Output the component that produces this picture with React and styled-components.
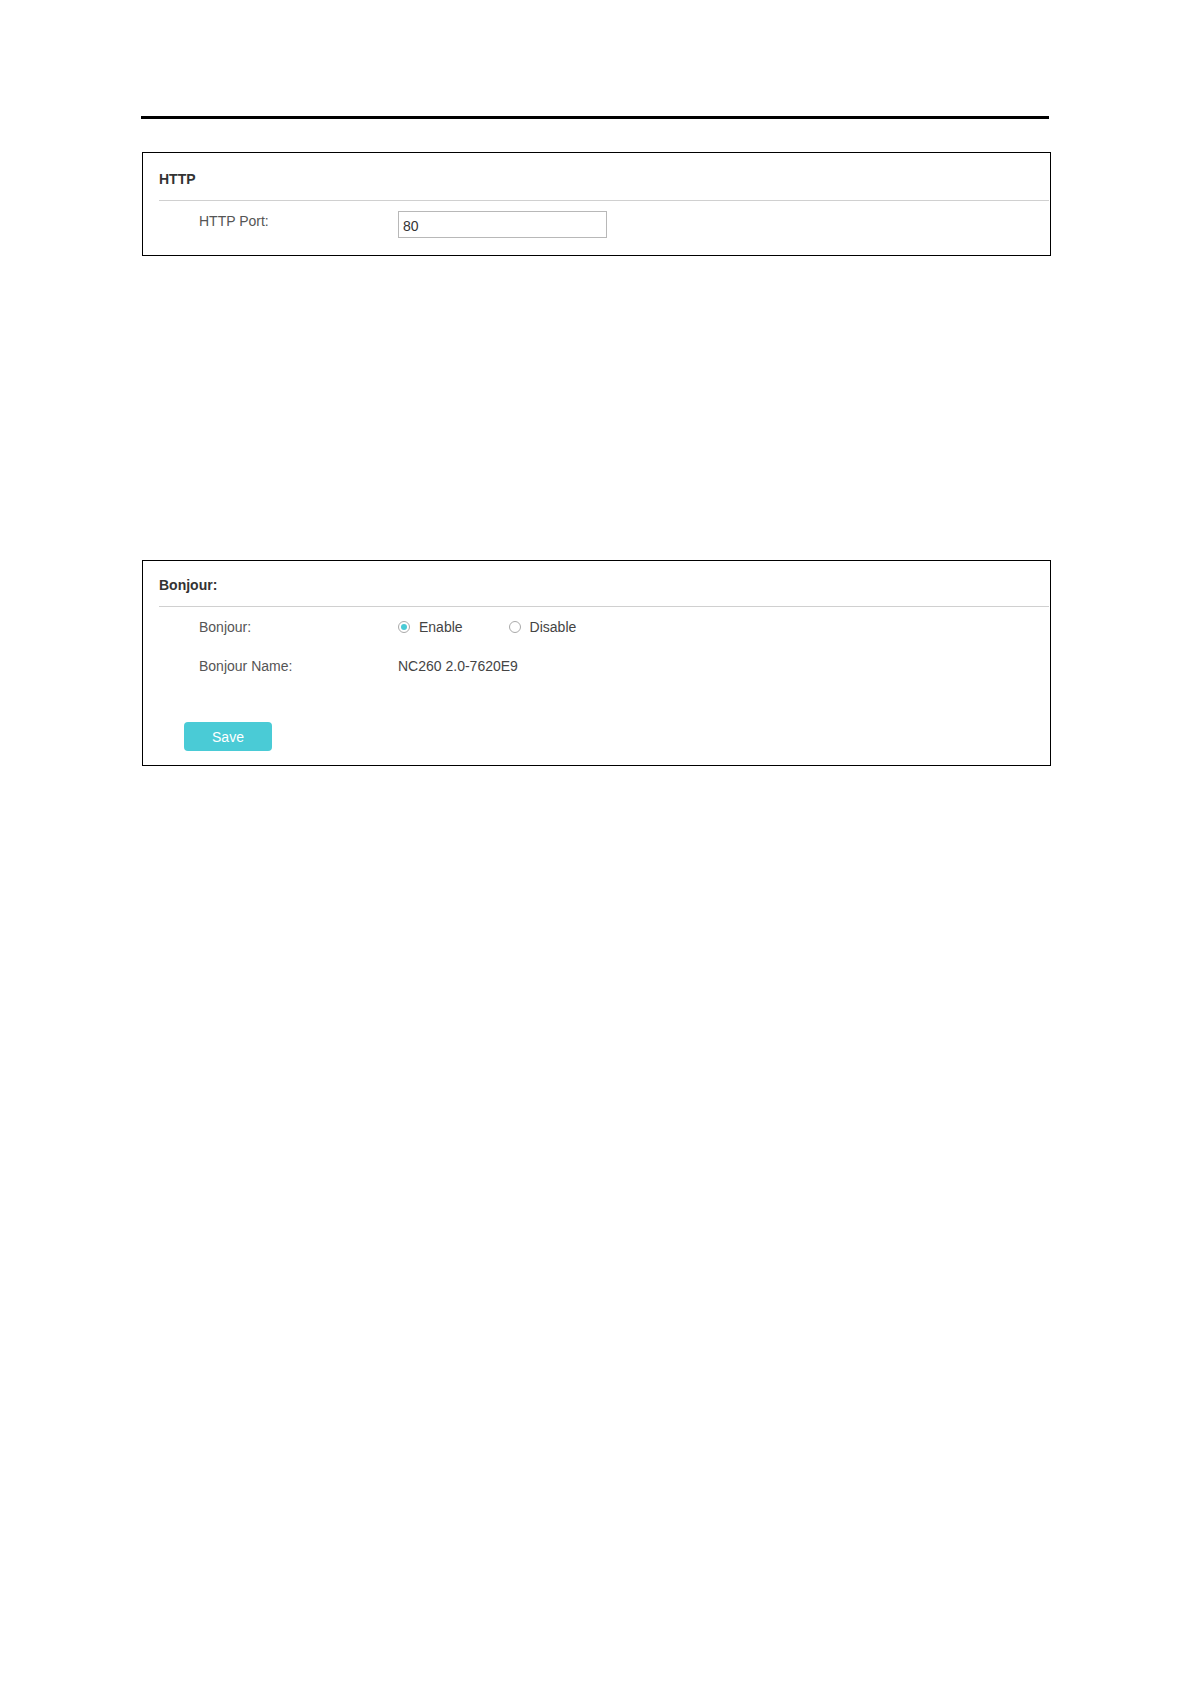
import React from "react";
import styled, { createGlobalStyle } from "styled-components";

const Global = createGlobalStyle`
  html, body { margin: 0; padding: 0; background: #fff; }
  body { font-family: "Liberation Sans", Arial, sans-serif; }
`;

const Page = styled.div`
  padding: 116px 0 0 141px;
  width: 1192px;
  box-sizing: border-box;
`;

const Rule = styled.div`
  width: 908px;
  height: 3px;
  background: #000;
`;

const Panel = styled.section`
  margin: ${(p) => p.$mt}px 0 0 1px;
  width: 909px;
  box-sizing: border-box;
  border: 1px solid #000;
  padding: 0 1px ${(p) => p.$pb}px 0;
`;

const Header = styled.div`
  margin-left: 16px;
  padding: ${(p) => p.$top}px 0 13px 0;
  border-bottom: 1px solid #d0d0d0;
  font-size: 14px;
  line-height: 16px;
  font-weight: bold;
  color: #333;
`;

const Body = styled.div`
  display: flex;
  flex-direction: column;
  gap: ${(p) => p.$gap || 0}px;
  padding: 10px 0 0 56px;
`;

const Row = styled.div`
  display: flex;
  align-items: flex-start;
  min-height: 18px;
`;

const Label = styled.div`
  width: 199px;
  padding-top: 2px;
  font-size: 14px;
  line-height: 16px;
  color: #555;
`;

const Value = styled.div`
  padding-top: 2px;
  font-size: 14px;
  line-height: 16px;
  color: #444;
`;

const TextInput = styled.input`
  width: 209px;
  height: 27px;
  box-sizing: border-box;
  margin: 0;
  border: 1px solid #b8b8b8;
  border-radius: 0;
  padding: 5px 4px 3px 4px;
  font-family: "Liberation Sans", Arial, sans-serif;
  font-size: 14px;
  color: #333;
  outline: none;
`;

const RadioGroup = styled.div`
  display: flex;
  align-items: center;
  height: 16px;
  margin-top: 2px;
  padding-left: 0;
`;

const Option = styled.label`
  display: flex;
  align-items: center;
  gap: 9px;
  margin-right: ${(p) => p.$mr || 0}px;
  font-size: 14px;
  line-height: 16px;
  color: #444;
`;

const RadioDot = styled.span`
  position: relative;
  width: 12px;
  height: 12px;
  box-sizing: border-box;
  border: 1px solid #aaa;
  border-radius: 50%;
  background: #fff;
  &::after {
    content: "";
    display: ${(p) => (p.$checked ? "block" : "none")};
    position: absolute;
    left: 2px;
    top: 2px;
    width: 6px;
    height: 6px;
    border-radius: 50%;
    background: #4acbd6;
  }
`;

const SaveButton = styled.button`
  margin: 48px 0 0 41px;
  width: 88px;
  height: 29px;
  border: none;
  border-radius: 4px;
  background: #4acbd6;
  color: #fff;
  font-family: "Liberation Sans", Arial, sans-serif;
  font-size: 14px;
  padding: 0;
  cursor: pointer;
`;

export default function App() {
  return (
    <>
      <Global />
      <Page>
        <Rule />
        <Panel $mt={33} $pb={17}>
          <Header $top={18}>HTTP</Header>
          <Body>
            <Row>
              <Label>HTTP Port:</Label>
              <TextInput defaultValue="80" />
            </Row>
          </Body>
        </Panel>
        <Panel $mt={304} $pb={14}>
          <Header $top={16}>Bonjour:</Header>
          <Body $gap={21}>
            <Row>
              <Label>Bonjour:</Label>
              <RadioGroup>
                <Option $mr={46}>
                  <RadioDot $checked />
                  Enable
                </Option>
                <Option>
                  <RadioDot />
                  Disable
                </Option>
              </RadioGroup>
            </Row>
            <Row>
              <Label>Bonjour Name:</Label>
              <Value>NC260 2.0-7620E9</Value>
            </Row>
          </Body>
          <SaveButton>Save</SaveButton>
        </Panel>
      </Page>
    </>
  );
}
